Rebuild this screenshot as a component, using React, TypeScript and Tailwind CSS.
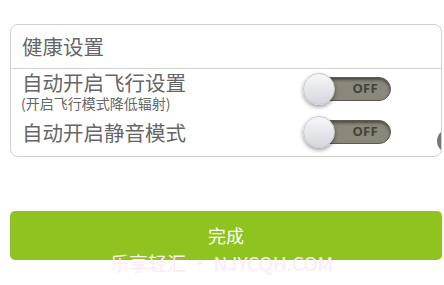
import React from "react";

function Toggle() {
  return (
    <div className="relative w-[88px] h-[32px] flex items-center">
      <div className="absolute left-[6px] right-0 top-[4px] h-[24px] rounded-full bg-[#8b877a] border border-[#5f5b52] shadow-[inset_0_2px_3px_rgba(0,0,0,0.45)] flex items-center justify-end pr-[12px]">
        <span className="text-[13px] font-bold text-[#45423b] tracking-[0.3px]" style={{ fontFamily: '"Open Sans", "Liberation Sans", sans-serif' }}>OFF</span>
      </div>
      <div className="absolute left-0 top-0 w-[32px] h-[32px] rounded-full bg-gradient-to-b from-[#f7f7fa] to-[#d6d7de] shadow-[0_2px_4px_rgba(0,0,0,0.4)] border border-[#c9cad0]" />
    </div>
  );
}

export default function App() {
  return (
    <div className="relative w-[444px] h-[285px] bg-white overflow-hidden" style={{ fontFamily: '"Noto Sans CJK SC", "Noto Sans", sans-serif' }}>
      <div className="pt-[24px] pl-[10px] pr-[2px]">
        <div className="relative rounded-[8px] border border-[#cfcfcf] h-[133px] overflow-hidden">
          <div className="h-[44px] border-b border-[#d6d6d6] flex items-center pl-[11px]">
            <span className="text-[20.5px] text-[#666] leading-none">健康设置</span>
          </div>
          <div className="flex items-start pl-[11px] pt-[2px]">
            <div className="flex flex-col w-[281px]">
              <span className="text-[20.5px] text-[#666] leading-[23px]">自动开启飞行设置</span>
              <span className="text-[14px] text-[#666] leading-[18px] -ml-[1px]">(开启飞行模式降低辐射)</span>
            </div>
            <div className="mt-[2px]"><Toggle /></div>
          </div>
          <div className="flex items-center pl-[11px] mt-[4px]">
            <span className="w-[281px] text-[20.5px] text-[#666] leading-[24px]">自动开启静音模式</span>
            <Toggle />
          </div>
          <div className="absolute right-[-20px] top-[104px] w-[24px] h-[24px] rounded-full bg-[#777]" />
        </div>
      </div>
      <div className="pt-[54px] px-[10px] pr-[2px]">
        <div className="h-[49px] rounded-[5px] bg-[#8fc31f] flex items-center justify-center">
          <span className="text-[18px] text-white">完成</span>
        </div>
      </div>
      <div className="absolute left-[110px] top-[251px] text-[19px] text-[#fde9f7] whitespace-nowrap leading-[24px]">乐享轻汇 · NJYCQH.COM</div>
    </div>
  );
}
